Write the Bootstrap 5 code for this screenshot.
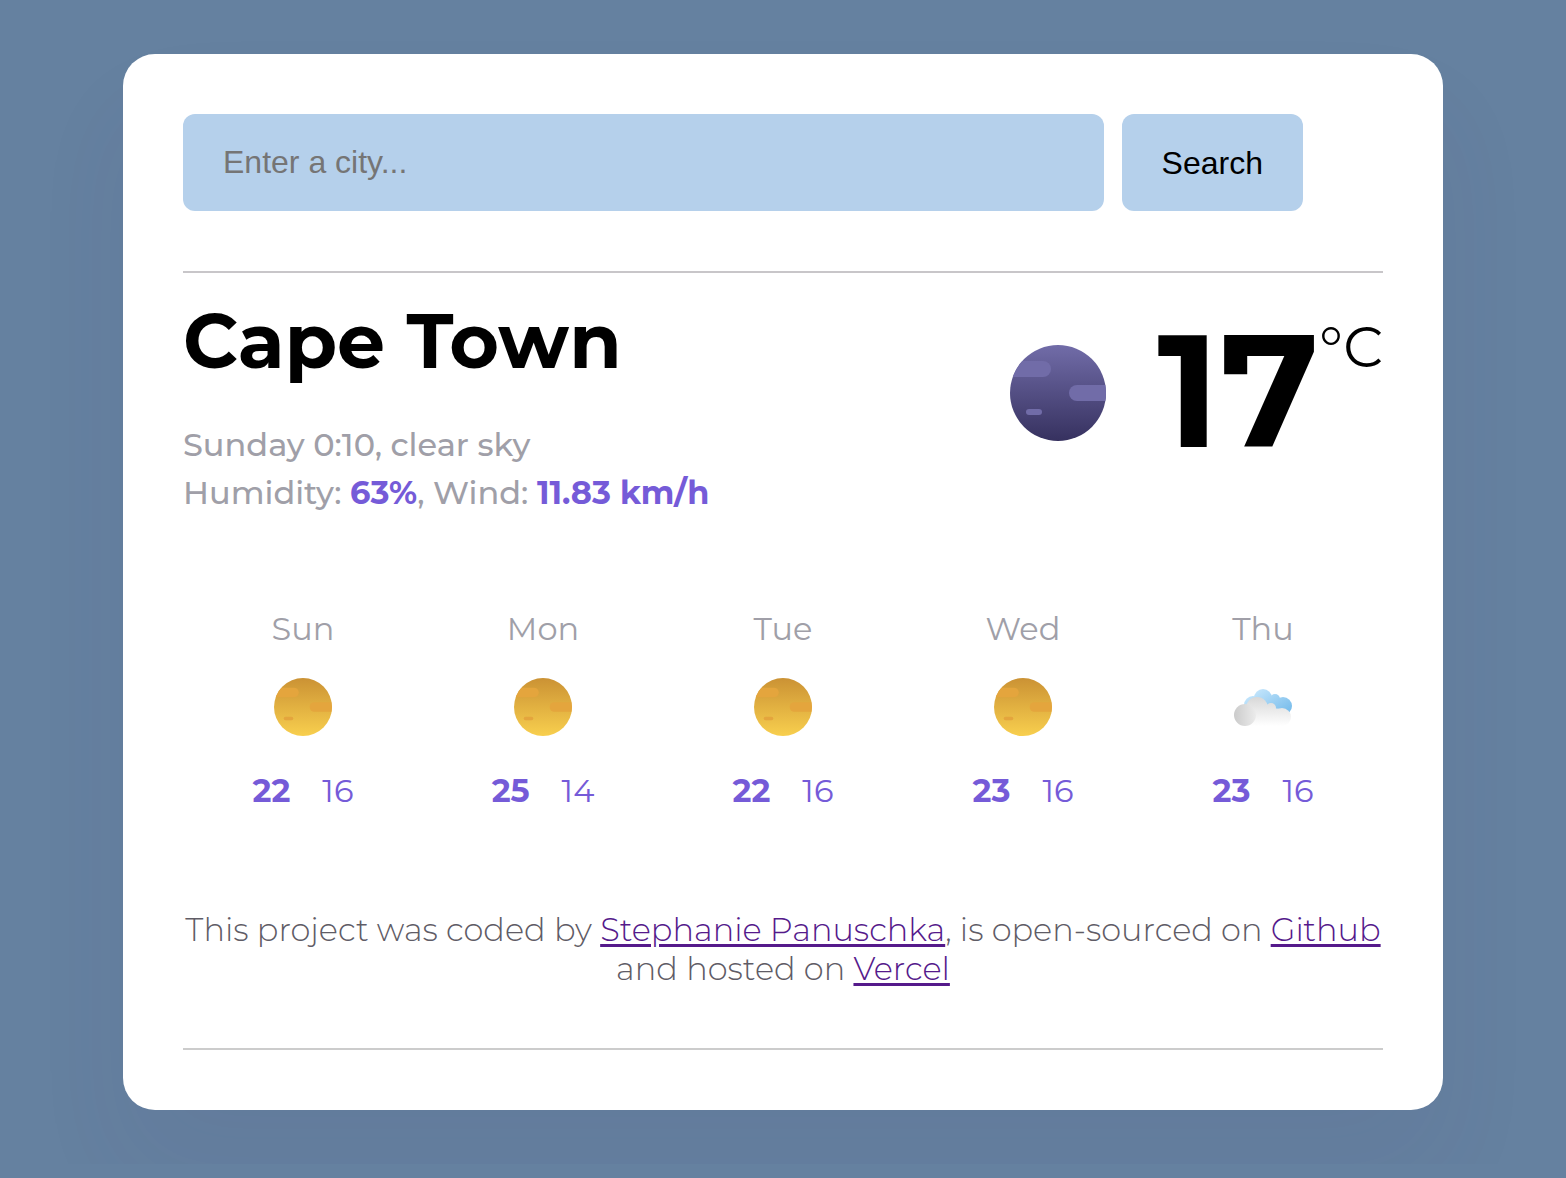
<!DOCTYPE html>
<html lang="en">
<head>
<meta charset="utf-8">
<meta name="viewport" content="width=device-width, initial-scale=1">
<title>Weather</title>
<link href="https://cdn.jsdelivr.net/npm/bootstrap@5.3.0/dist/css/bootstrap.min.css" rel="stylesheet">
<style>
  body { background: #6581a0; font-family: Montserrat, Inter, "Open Sans", sans-serif; color: #000; font-size: 32px; }
  .weather-app { max-width: 1320px; margin: 54px auto; padding: 60px; border-radius: 32px; box-shadow: 0 60px 100px rgba(65, 50, 100, .06); }
  .search-form { gap: 18px; padding-right: 80px; padding-bottom: 60px; }
  .search-field, .search-btn { height: 97px; padding: 0 40px; border: 0; border-radius: 12px; background: #b5d0eb; color: #000; font-family: "Liberation Sans", Arial, sans-serif; font-size: 32px; }
  .search-field:focus, .search-btn:hover { background: #a7c6e5; color: #000; }
  .search-field::placeholder { color: #757575; }
  .current { border-top: 2px solid #c8c6c9; padding-top: 20px; }
  .city { font-size: 76px; line-height: 96px; font-weight: 700; margin-bottom: 32px; }
  .details { color: #a09fa8; font-weight: 500; line-height: 48px; }
  .details strong, .forecast-temps { color: #755bd8; }
  .reading { gap: 51px; padding-top: 26px; }
  .reading-icon { width: 96px; height: 96px; margin-top: 26px; }
  .degrees { font-size: 160px; line-height: 142px; font-weight: 700; }
  .unit { font-size: 56px; line-height: 56px; font-weight: 400; }
  .forecast { padding-top: 92px; line-height: 39px; }
  .day-name { color: #a09fa8; }
  .day-icon { width: 58px; height: 58px; margin: 30px 0 35px; }
  .forecast-temps { gap: 32px; }
  .credits { color: #5f5c66; font-weight: 300; line-height: 39px; margin-top: 100px; padding-bottom: 60px; border-bottom: 2px solid #cccccc; }
  .credits a { color: #551a8b; text-underline-offset: 3px; text-decoration-thickness: 3px; }
</style>
</head>
<body>
<svg width="0" height="0" class="position-absolute" aria-hidden="true">
  <defs>
    <linearGradient id="night" x1="0" y1="0" x2="0" y2="1"><stop offset="0" stop-color="#716ca8"/><stop offset="1" stop-color="#36315f"/></linearGradient>
    <linearGradient id="day" x1="0" y1="0" x2="0" y2="1"><stop offset="0" stop-color="#cb9234"/><stop offset="1" stop-color="#f8cf4e"/></linearGradient>
    <linearGradient id="sky" gradientUnits="userSpaceOnUse" x1="22" y1="11" x2="42" y2="40"><stop offset="0" stop-color="#c5e6fc"/><stop offset="1" stop-color="#7dbfec"/></linearGradient>
    <linearGradient id="front" gradientUnits="userSpaceOnUse" x1="0" y1="19" x2="0" y2="48"><stop offset="0" stop-color="#d8d8d8"/><stop offset="1" stop-color="#ffffff"/></linearGradient>
    <linearGradient id="puff" x1="0" y1="0" x2="1" y2="0"><stop offset="0" stop-color="#cbcbcb"/><stop offset="1" stop-color="#ebebeb"/></linearGradient>
    <clipPath id="disc"><circle cx="48" cy="48" r="48"/></clipPath>
    <symbol id="sun" viewBox="0 0 96 96"><g clip-path="url(#disc)"><path fill="url(#day)" d="M0 0h96v96H0z"/><g fill="#e4a53d"><rect x="-10" y="16" width="51" height="16" rx="8"/><rect x="59" y="40" width="50" height="16" rx="8"/><rect x="16" y="64" width="16" height="6" rx="3"/></g></g></symbol>
  </defs>
</svg>

<main class="weather-app container-fluid bg-white">
  <form class="search-form d-flex" onsubmit="return false">
    <input type="search" class="search-field form-control flex-grow-1" placeholder="Enter a city..." aria-label="City">
    <button type="submit" class="search-btn btn">Search</button>
  </form>

  <section class="current d-flex justify-content-between align-items-start">
    <div>
      <h1 class="city">Cape Town</h1>
      <div class="details">
        <div>Sunday 0:10, clear sky</div>
        <div>Humidity: <strong>63%</strong>, Wind: <strong>11.83 km/h</strong></div>
      </div>
    </div>
    <div class="reading d-flex">
      <svg class="reading-icon" viewBox="0 0 96 96" role="img" aria-label="Clear night"><g clip-path="url(#disc)"><path fill="url(#night)" d="M0 0h96v96H0z"/><g fill="#716ca8"><rect x="-10" y="16" width="51" height="16" rx="8"/><rect x="59" y="40" width="50" height="16" rx="8"/><rect x="16" y="64" width="16" height="6" rx="3"/></g></g></svg>
      <div class="d-flex align-items-start">
        <span class="degrees">17</span><span class="unit">°C</span>
      </div>
    </div>
  </section>

  <section class="forecast row g-0 text-center">
    <div class="col">
      <div class="day-name">Sun</div>
      <svg class="day-icon" role="img" aria-label="Clear"><use href="#sun"/></svg>
      <div class="forecast-temps d-flex justify-content-center"><strong>22</strong><span>16</span></div>
    </div>
    <div class="col">
      <div class="day-name">Mon</div>
      <svg class="day-icon" role="img" aria-label="Clear"><use href="#sun"/></svg>
      <div class="forecast-temps d-flex justify-content-center"><strong>25</strong><span>14</span></div>
    </div>
    <div class="col">
      <div class="day-name">Tue</div>
      <svg class="day-icon" role="img" aria-label="Clear"><use href="#sun"/></svg>
      <div class="forecast-temps d-flex justify-content-center"><strong>22</strong><span>16</span></div>
    </div>
    <div class="col">
      <div class="day-name">Wed</div>
      <svg class="day-icon" role="img" aria-label="Clear"><use href="#sun"/></svg>
      <div class="forecast-temps d-flex justify-content-center"><strong>23</strong><span>16</span></div>
    </div>
    <div class="col">
      <div class="day-name">Thu</div>
      <svg class="day-icon" viewBox="0 0 58 58" role="img" aria-label="Clouds">
        <g fill="url(#sky)"><circle cx="19" cy="27" r="9"/><circle cx="29" cy="20" r="9"/><circle cx="41" cy="21" r="5"/><circle cx="49" cy="28" r="9"/><path d="M19 22h30v15H19z"/></g>
        <g fill="url(#front)"><circle cx="23" cy="30" r="11"/><circle cx="37" cy="30" r="5"/><circle cx="48" cy="39" r="9"/><path d="M12 30h25l11 1v17H12z"/></g>
        <circle cx="11" cy="37" r="11" fill="url(#puff)"/>
      </svg>
      <div class="forecast-temps d-flex justify-content-center"><strong>23</strong><span>16</span></div>
    </div>
  </section>

  <footer class="credits text-center">
    This project was coded by <a href="#">Stephanie Panuschka</a>, is open-sourced on <a href="#">Github</a> and hosted on <a href="#">Vercel</a>
  </footer>
</main>
<script src="https://cdn.jsdelivr.net/npm/bootstrap@5.3.0/dist/js/bootstrap.bundle.min.js"></script>
</body>
</html>
